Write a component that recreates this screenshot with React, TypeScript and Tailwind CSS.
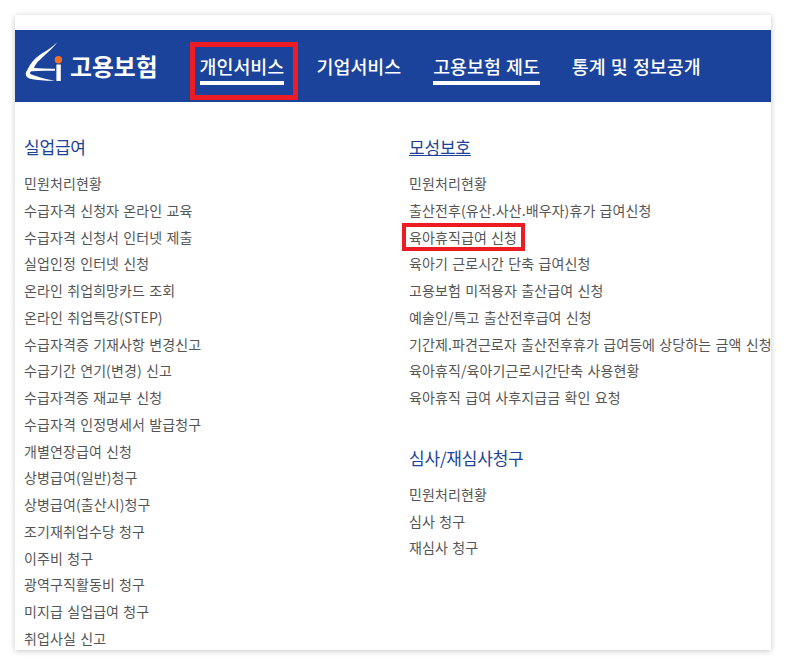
// Employment insurance service menu: blue nav bar over two columns of links.
const FONT = "font-['Noto_Sans_CJK_KR','Noto_Sans',sans-serif]";

const unemployment = [
  "민원처리현황",
  "수급자격 신청자 온라인 교육",
  "수급자격 신청서 인터넷 제출",
  "실업인정 인터넷 신청",
  "온라인 취업희망카드 조회",
  "온라인 취업특강(STEP)",
  "수급자격증 기재사항 변경신고",
  "수급기간 연기(변경) 신고",
  "수급자격증 재교부 신청",
  "수급자격 인정명세서 발급청구",
  "개별연장급여 신청",
  "상병급여(일반)청구",
  "상병급여(출산시)청구",
  "조기재취업수당 청구",
  "이주비 청구",
  "광역구직활동비 청구",
  "미지급 실업급여 청구",
  "취업사실 신고",
];

const maternity = [
  "민원처리현황",
  "출산전후(유산.사산.배우자)휴가 급여신청",
  "육아휴직급여 신청",
  "육아기 근로시간 단축 급여신청",
  "고용보험 미적용자 출산급여 신청",
  "예술인/특고 출산전후급여 신청",
  "기간제.파견근로자 출산전후휴가 급여등에 상당하는 금액 신청",
  "육아휴직/육아기근로시간단축 사용현황",
  "육아휴직 급여 사후지급금 확인 요청",
];

const appeal = ["민원처리현황", "심사 청구", "재심사 청구"];

function Logo() {
  return (
    <svg width="40" height="48" viewBox="0 0 40 48" className="shrink-0" aria-hidden>
      <path
        d="M33.7 0 C27 6 22 9 16 12.7 C10 17 6 22 4.3 26 C3 28.5 1.7 30 1.7 32 C2 35 4 36 6 36.7 C14 38.5 24 38.8 31 38.7 C24 37.5 17 36 12.7 34.3 C9 33 6 32.5 6 31 C6 30 7 29.5 7.7 29.3 C15 28.8 24 28.7 31 28.7 L31 26.7 C24 26.8 17 26.5 10 26 C11 23 13 20 16 17.7 C20 14 28 7 33.7 0 Z"
        fill="#fff"
      />
      <rect x="32.4" y="22.5" width="4.4" height="16.5" fill="#fff" />
      <circle cx="34.4" cy="17.7" r="3.7" fill="#ee7127" />
    </svg>
  );
}

function LinkRow({ label, marked }: { label: string; marked?: boolean }) {
  return (
    <li className="h-[26.75px] text-[14px] leading-[26.75px] tracking-[0.1px] [word-spacing:1px] whitespace-nowrap text-[#555]">
      <span className="relative inline-block">
        {label}
        {marked && <span className="absolute -top-[1px] -right-[8px] -bottom-[1px] -left-[7px] border-[4px] border-[#ed1c24]" />}
      </span>
    </li>
  );
}

function Section({
  title,
  items,
  marked,
  hovered,
}: {
  title: string;
  items: string[];
  marked?: string;
  hovered?: boolean;
}) {
  return (
    <section>
      <h2 className="mb-[11px] text-[17px] leading-[24px] tracking-[-0.2px] text-[#1d4299]">
        <span className={hovered ? "underline underline-offset-[1px]" : undefined}>{title}</span>
      </h2>
      <ul>
        {items.map((item) => (
          <LinkRow key={item} label={item} marked={item === marked} />
        ))}
      </ul>
    </section>
  );
}

export default function App() {
  return (
    <div className={`h-[665px] w-[786px] bg-white p-[15px] ${FONT}`}>
      <div className="h-[635px] w-[756px] overflow-hidden bg-white pt-[15px] shadow-[0_1px_6px_rgba(0,0,0,0.22)]">
        <header className="flex h-[72px] items-center bg-[#1c439b] pl-[9px]">
          <div className="mr-[32px] flex items-center gap-[6px]">
            <Logo />
            <span className="text-[23.8px] leading-none font-bold text-white">고용보험</span>
          </div>
          <nav className="flex h-full items-start pt-[12px] text-[18.4px] leading-[26px] font-medium [word-spacing:1px] text-white">
            <div className="mr-[19px] h-[58px] w-[108px] border-[5px] border-[#ed1c24] pt-[6px] pl-[5px]">
              <span className="inline-block border-b-[4px] border-white pb-[2px]">개인서비스</span>
            </div>
            <span className="mt-[11px] mr-[32px]">기업서비스</span>
            <span className="mt-[11px] mr-[32px] border-b-[4px] border-white pb-[2px]">고용보험 제도</span>
            <span className="mt-[11px]">통계 및 정보공개</span>
          </nav>
        </header>
        <div className="flex pt-[33px]">
          <div className="w-[384px] shrink-0 pl-[9px]">
            <Section title="실업급여" items={unemployment} />
          </div>
          <div className="min-w-0 pl-[10px] whitespace-nowrap">
            <Section title="모성보호" items={maternity} marked="육아휴직급여 신청" hovered />
            <div className="mt-[35px]">
              <Section title="심사/재심사청구" items={appeal} />
            </div>
          </div>
        </div>
      </div>
    </div>
  );
}
